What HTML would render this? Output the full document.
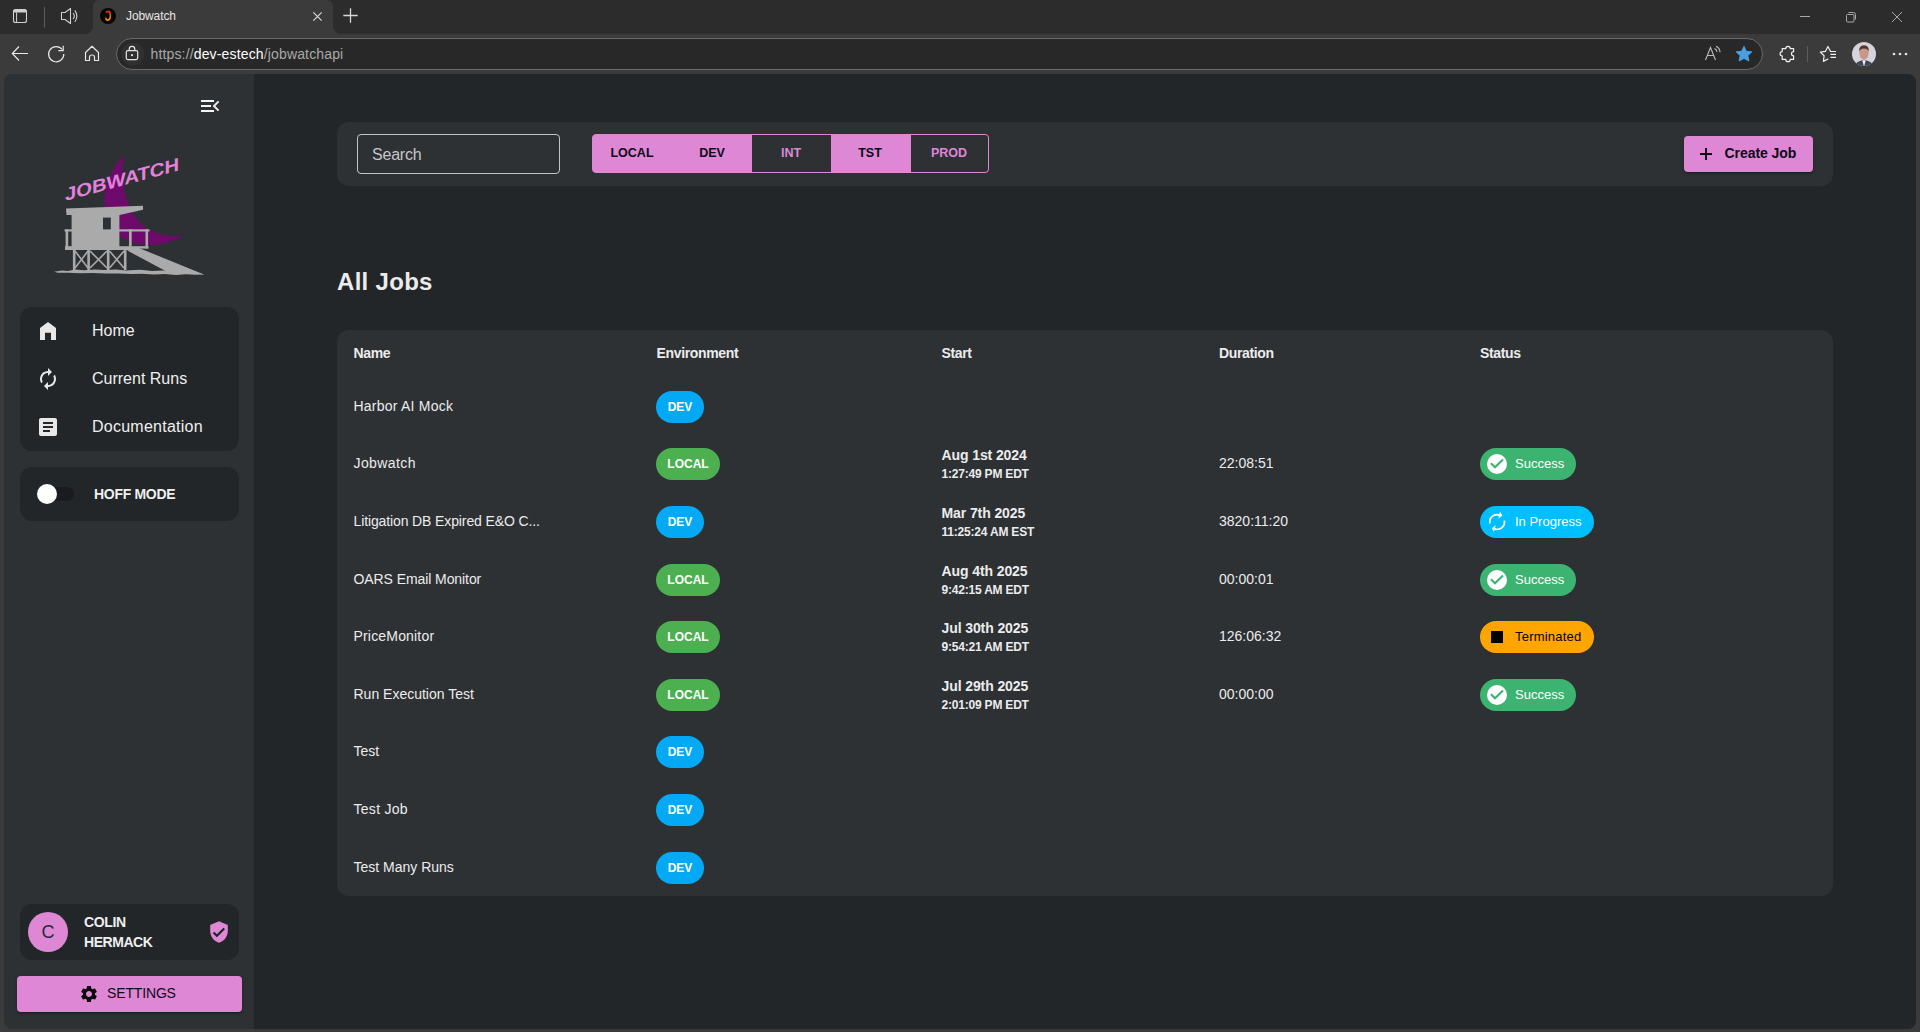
<!DOCTYPE html>
<html><head><meta charset="utf-8"><title>Jobwatch</title>
<style>
*{box-sizing:border-box;margin:0;padding:0}
html,body{width:1920px;height:1032px;overflow:hidden;background:#3b3b3b;font-family:"Liberation Sans",sans-serif;position:relative}
.a{position:absolute}
.t{position:absolute;line-height:1;white-space:nowrap}
.card{position:absolute;background:#232629;border-radius:12px}
.mcard{position:absolute;background:#2d3134;border-radius:12px}
.w{color:#efefef}
.tg{font-size:12.5px;font-weight:700;text-align:center;letter-spacing:0px}
.th{top:346.2px;font-size:14px;font-weight:700;color:#ececec;letter-spacing:-0.35px}
.nm{font-size:14px;color:#ececec}
.chip{position:absolute;height:32px;border-radius:16px;color:#fff;font-weight:700;font-size:12px;line-height:32px;text-align:center}
.d1{font-size:14px;font-weight:700;color:#ececec;letter-spacing:-0.1px}
.d2{font-size:12px;font-weight:700;color:#ececec;letter-spacing:-0.2px}
.du{font-size:14px;color:#ececec}
.st{position:absolute;height:32px;border-radius:16px;left:1480px}
.stt{font-size:13px}
</style></head>
<body>
<!-- browser chrome -->
<svg class="a" style="left:0;top:0" width="1920" height="74" viewBox="0 0 1920 74">
  <rect x="0" y="0" width="1920" height="74" fill="#3b3b3b"/>
  <!-- tab strip dark areas with rounded bottom corners near active tab -->
  <path d="M0 0H93V26a8 8 0 0 1 -8 8H0Z" fill="#2c2c2c"/>
  <path d="M333 0H1920V34H341a8 8 0 0 1 -8 -8Z" fill="#2c2c2c"/>
  <!-- active tab top corners -->
  <path d="M93 0H99a6 6 0 0 0 -6 6Z" fill="#2c2c2c"/>
  <path d="M333 0H327a6 6 0 0 1 6 6Z" fill="#2c2c2c"/>
  <!-- tab actions icon -->
  <rect x="13.5" y="9.5" width="13" height="13" rx="2" fill="none" stroke="#d0d0d0" stroke-width="1.1"/>
  <rect x="13.5" y="9.5" width="13" height="3" rx="1.5" fill="#d0d0d0"/>
  <line x1="16.6" y1="12.3" x2="16.6" y2="22.3" stroke="#d4d4d4" stroke-width="1"/>
  <line x1="44.5" y1="7" x2="44.5" y2="27.5" stroke="#5e5e5e" stroke-width="1"/>
  <!-- speaker -->
  <path d="M61.5 12.5H65L70.5 8.5V23.5L65 19.5H61.5Z" fill="none" stroke="#d0d0d0" stroke-width="1.1" stroke-linejoin="round"/>
  <path d="M73.1 13.1Q75.6 16 73.1 19" fill="none" stroke="#d0d0d0" stroke-width="1.1"/>
  <path d="M74.8 10.4Q79 16 74.8 21.8" fill="none" stroke="#d0d0d0" stroke-width="1.1"/>
  <!-- favicon -->
  <circle cx="108" cy="16" r="8" fill="#050505"/>
  <linearGradient id="jg" x1="0" y1="0" x2="0" y2="1"><stop offset="0" stop-color="#e02a08"/><stop offset="1" stop-color="#ff9a00"/></linearGradient><path d="M106.3 11.9L109.5 11.2Q110.8 15 110.2 17.5Q109.3 20.4 107.4 20.2Q106.1 20 105.9 18.4" fill="none" stroke="url(#jg)" stroke-width="1.6" stroke-linecap="round" stroke-linejoin="round"/>
  <text x="126" y="19.7" font-family="Liberation Sans" font-size="12" letter-spacing="-0.1" fill="#e6e6e6">Jobwatch</text>
  <!-- close tab -->
  <path d="M313.3 12.3L321.7 20.7M321.7 12.3L313.3 20.7" stroke="#d8d8d8" stroke-width="1.2"/>
  <!-- new tab -->
  <path d="M343.3 15.5H357.7M350.5 8.2V22.8" stroke="#d8d8d8" stroke-width="1.3"/>
  <!-- window controls -->
  <line x1="1800" y1="16.5" x2="1810" y2="16.5" stroke="#a8a8a8" stroke-width="1"/>
  <rect x="1846.5" y="14.5" width="7.5" height="7.5" rx="1" fill="none" stroke="#a8a8a8" stroke-width="1"/>
  <path d="M1848.5 12.5H1853.5a2 2 0 0 1 2 2V19.5" fill="none" stroke="#a8a8a8" stroke-width="1"/>
  <path d="M1892 12L1902 22M1902 12L1892 22" stroke="#a8a8a8" stroke-width="1"/>
  <!-- back / refresh / home -->
  <path d="M12.5 53.5H28M19 46.5L12.3 53.5L19 60.5" fill="none" stroke="#e6e6e6" stroke-width="1.2"/>
  <path d="M62.2 49.5A7.6 7.6 0 1 0 63.8 54" fill="none" stroke="#e6e6e6" stroke-width="1.2"/>
  <path d="M58.3 50.6H63.2V45.8" fill="none" stroke="#e6e6e6" stroke-width="1.2"/>
  <path d="M85.5 60.5V52.5L92 46.3L98.5 52.5V60.5H94.5V57Q94.5 55 92 55Q89.5 55 89.5 57V60.5Z" fill="none" stroke="#e6e6e6" stroke-width="1.2" stroke-linejoin="round"/>
  <!-- address bar -->
  <rect x="116.5" y="38.5" width="1646" height="31" rx="15.5" fill="#282828" stroke="#6a6a6a" stroke-width="1"/>
  <circle cx="132.8" cy="54" r="11.5" fill="#303030"/>
  <rect x="126.3" y="50.6" width="11.4" height="9" rx="1.5" fill="none" stroke="#e6e6e6" stroke-width="1.2"/>
  <path d="M129.2 50.6V49.2a2.8 2.8 0 0 1 5.6 0V50.6" fill="none" stroke="#e6e6e6" stroke-width="1.2"/>
  <circle cx="132" cy="55.2" r="1.1" fill="#e6e6e6"/>
  <text x="150.5" y="59" font-family="Liberation Sans" font-size="14" letter-spacing="0.15" fill="#a9a9a9">https://<tspan fill="#ffffff">dev-estech</tspan>/jobwatchapi</text>
  <!-- read aloud -->
  <path d="M1705.5 60L1710.5 47.5L1715.5 60M1707.3 55.5H1713.7" fill="none" stroke="#bdbdbd" stroke-width="1.1"/>
  <path d="M1714.5 48.5a4 4 0 0 1 2.5 3.5M1716 46.2a6.8 6.8 0 0 1 4 6" fill="none" stroke="#bdbdbd" stroke-width="1.1"/>
  <!-- star filled -->
  <path d="M1744 46.3L1746.4 51.3L1751.8 51.9L1747.8 55.6L1748.9 61L1744 58.3L1739.1 61L1740.2 55.6L1736.2 51.9L1741.6 51.3Z" fill="#4a9fdf" stroke="#4a9fdf" stroke-width="1" stroke-linejoin="round"/>
  <!-- extensions -->
  <path d="M1782.2 48.6H1785.8A2.2 2.3 0 0 1 1790.2 48.6H1793.6V51.7A2.1 2.05 0 0 0 1793.6 55.8V59.4H1790.2A2.2 2.3 0 0 1 1785.8 59.4H1782.2V55.9A2.1 2.15 0 0 1 1782.2 51.6Z" fill="none" stroke="#f0f0f0" stroke-width="1.2" stroke-linejoin="round"/>
  <line x1="1807.5" y1="46" x2="1807.5" y2="62" stroke="#5e5e5e" stroke-width="1"/>
  <!-- favorites -->
  <path d="M1830.6 51.5L1827.9 46.5L1825.5 51.3L1820.3 52.1L1824.1 55.8L1823.4 61.4L1827.9 59" fill="none" stroke="#f0f0f0" stroke-width="1.2" stroke-linejoin="round" stroke-linecap="round"/>
  <path d="M1830.4 51.5H1836M1830.4 54.4H1836M1830.4 57.3H1836" stroke="#f0f0f0" stroke-width="1.2"/>
  <!-- avatar -->
  <clipPath id="avc"><circle cx="1864" cy="54" r="12"/></clipPath>
  <g clip-path="url(#avc)">
    <rect x="1852" y="42" width="24" height="24" fill="#d6d3dc"/>
    <path d="M1854 67Q1855.5 61 1864 60Q1872.5 61 1874 67Z" fill="#3c4656"/>
    <path d="M1862.3 60.2L1864 67L1865.7 60.2Z" fill="#eeeeee"/>
    <ellipse cx="1864" cy="53.5" rx="4.6" ry="6.2" fill="#c8978a"/>
    <path d="M1859.2 52Q1858.6 45.5 1864 45.3Q1869.4 45.5 1868.8 52Q1868 48.6 1864 48.4Q1860 48.6 1859.2 52Z" fill="#5a3424"/>
  </g>
  <!-- more -->
  <circle cx="1894" cy="54" r="1.3" fill="#e6e6e6"/>
  <circle cx="1900" cy="54" r="1.3" fill="#e6e6e6"/>
  <circle cx="1906" cy="54" r="1.3" fill="#e6e6e6"/>
</svg>

<!-- app -->
<!-- sidebar -->
<div class="a" style="left:4px;top:74px;width:250px;height:955px;background:#2d3134;border-radius:8px 0 0 8px"></div>
<svg class="a" style="left:196px;top:94px" width="24" height="24" viewBox="0 0 24 24">
  <path d="M5 7H18M5 12H15M5 17H18" stroke="#f4f4f4" stroke-width="2"/>
  <path d="M22.6 7.4L18 12L22.6 16.6" fill="none" stroke="#ececec" stroke-width="2"/>
</svg>
<!-- logo -->
<svg class="a" style="left:50px;top:145px" width="160" height="135" viewBox="50 145 160 135">
  <path d="M124 155 C108 172 101 195 106 214 C112 236 132 247 154 245 C166 244 176 240 183.5 235.5 C165 238 146 232 136 218 C125 202 120 178 124 155Z" fill="#6d0a6c"/>
  <g fill="#aaaaaa">
    <path d="M66 208.5L143 205.8L143 209.8L119.5 215H66.5Z"/>
    <rect x="71.6" y="213" width="47.8" height="35.5"/>
    <rect x="64.5" y="229.3" width="85" height="2.2"/>
    <rect x="65" y="246.2" width="83.5" height="2.4"/>
    <rect x="65.6" y="229.3" width="2.6" height="19"/>
    <rect x="129" y="229.3" width="2.7" height="19"/>
    <rect x="145.5" y="229.3" width="2.6" height="19"/>
    <rect x="65" y="247.5" width="74" height="2.5"/>
    <rect x="72.9" y="248" width="2.6" height="22"/>
    <rect x="87.3" y="248" width="2.6" height="22"/>
    <rect x="106.9" y="248" width="2.6" height="22"/>
    <rect x="123.9" y="248" width="2.6" height="22"/>
    <path d="M127.2 250.5L139 248L204 274.5L166.5 271.5Z"/>
    <path d="M54 271.8L62 270.6L68 270.9L75 269.6L84 270.2L95 269.4L104 270.1L116 269.6L126 270.4L140 269.8L152 270.9L163 270.6L176 271.6L188 272.1L198 273.2L204.5 274.4L196 274.8L186 274.2L176 274.9L165 274.1L154 274.6L142 273.7L131 274.1L118 273.4L106 273.6L92 273.1L80 273.2L68 272.8L58 272.7Z"/>
  </g>
  <rect x="103" y="217.6" width="7.8" height="11.8" fill="#2d3134"/>
  <g stroke="#aaaaaa" stroke-width="1.6">
    <path d="M75 251L88 268M88 251L75 268M90 251L107 268M107 251L90 268M109.5 251L124 268M124 251L109.5 268"/>
  </g>
  <text x="0" y="0" transform="translate(65 201) skewY(-15)" font-family="Liberation Sans" font-weight="700" font-size="18.5" fill="#e382db" textLength="114" lengthAdjust="spacingAndGlyphs">JOBWATCH</text>
</svg>

<div class="card" style="left:20px;top:307px;width:219px;height:144px"></div>
<svg class="a" style="left:36px;top:319px" width="24" height="24" viewBox="0 0 24 24"><path d="M4 21V9l8-6 8 6v12h-5v-7.3h-6V21Z" fill="#e8e8e8"/></svg>
<svg class="a" style="left:36px;top:367px" width="24" height="24" viewBox="0 0 24 24"><g transform="translate(24 0) scale(-1 1)"><path d="M12 4V1L8 5l4 4V6c3.31 0 6 2.69 6 6 0 1.01-.25 1.97-.7 2.8l1.46 1.46C19.54 15.03 20 13.57 20 12c0-4.42-3.58-8-8-8zm0 14c-3.31 0-6-2.690-6-6 0-1.01.25-1.97.7-2.8L5.24 7.74C4.46 8.97 4 10.43 4 12c0 4.42 3.58 8 8 8v3l4-4-4-4v3z" fill="#e8e8e8"/></g></svg>
<svg class="a" style="left:36px;top:415px" width="24" height="24" viewBox="0 0 24 24"><path d="M19 3H5c-1.1 0-2 .9-2 2v14c0 1.1.9 2 2 2h14c1.1 0 2-.9 2-2V5c0-1.1-.9-2-2-2zm-5 14H7v-2h7v2zm3-4H7v-2h10v2zm0-4H7V7h10v2z" fill="#e8e8e8"/></svg>
<div class="t w" style="left:92px;top:323px;font-size:16px">Home</div>
<div class="t w" style="left:92px;top:371px;font-size:16px">Current Runs</div>
<div class="t w" style="left:92px;top:419px;font-size:16px;letter-spacing:0.25px">Documentation</div>

<div class="card" style="left:20px;top:467px;width:219px;height:54px"></div>
<div class="a" style="left:40px;top:487px;width:34px;height:14px;border-radius:7px;background:#191b1e"></div>
<div class="a" style="left:36.7px;top:483.7px;width:20.6px;height:20.6px;border-radius:50%;background:#ffffff"></div>
<div class="t w" style="left:94px;top:487.1px;font-size:14px;font-weight:700;letter-spacing:-0.3px">HOFF MODE</div>

<div class="card" style="left:20px;top:904px;width:219px;height:56px"></div>
<div class="a" style="left:28px;top:912px;width:40px;height:40px;border-radius:50%;background:#de87d5"></div>
<div class="t" style="left:28px;top:923.2px;width:40px;text-align:center;font-size:18px;color:#1f2a3c">C</div>
<div class="t w" style="left:84px;top:915.1px;font-size:14px;font-weight:700;letter-spacing:-0.35px">COLIN</div>
<div class="t w" style="left:84px;top:935.2px;font-size:14px;font-weight:700;letter-spacing:-0.45px">HERMACK</div>
<svg class="a" style="left:207px;top:920px" width="24" height="24" viewBox="0 0 24 24"><path d="M12 1.2L3.2 4.9v6.1c0 5.4 3.8 10.5 8.8 11.7 5-1.2 8.8-6.3 8.8-11.7V4.9Z" fill="#de87d5"/><path d="M6.5 12.5L9.9 15.8L17.2 8.5" fill="none" stroke="#1e2224" stroke-width="2.1"/></svg>

<div class="a" style="left:17px;top:976px;width:225px;height:36px;background:#de87d5;border-radius:4px;box-shadow:0 3px 1px -2px rgba(0,0,0,.2),0 2px 2px 0 rgba(0,0,0,.14),0 1px 5px 0 rgba(0,0,0,.12)"></div>
<svg class="a" style="left:79px;top:984px" width="20" height="20" viewBox="0 0 24 24"><path d="M19.14 12.94c.04-.3.06-.61.06-.94 0-.32-.02-.64-.07-.94l2.03-1.58c.18-.14.23-.41.12-.61l-1.92-3.32c-.12-.22-.37-.29-.59-.22l-2.39.96c-.5-.38-1.03-.7-1.62-.94l-.36-2.54c-.04-.24-.24-.41-.48-.41h-3.84c-.24 0-.43.17-.47.41l-.36 2.54c-.59.24-1.13.57-1.62.94l-2.39-.96c-.22-.08-.47 0-.59.22L2.74 8.87c-.12.21-.08.47.12.61l2.03 1.58c-.05.3-.09.63-.09.94s.02.64.07.94l-2.03 1.58c-.18.14-.23.41-.12.61l1.92 3.32c.12.22.37.29.59.22l2.39-.96c.5.38 1.03.7 1.62.94l.36 2.54c.05.24.24.41.48.41h3.84c.24 0 .44-.17.47-.41l.36-2.54c.59-.24 1.13-.56 1.62-.94l2.39.96c.22.08.47 0 .59-.22l1.92-3.32c.12-.22.07-.47-.12-.61l-2.01-1.58zM12 15.6c-1.98 0-3.6-1.62-3.6-3.6s1.62-3.6 3.6-3.6 3.6 1.62 3.6 3.6-1.62 3.6-3.6 3.6z" fill="#0a0a0a"/></svg>
<div class="t" style="left:107px;top:986.1px;font-size:14px;letter-spacing:-0.15px;color:#0c0c14">SETTINGS</div>

<!-- main -->
<div class="a" style="left:254px;top:74px;width:1662px;height:955px;background:#232629;border-radius:0 8px 8px 0"></div>
<div class="mcard" style="left:337px;top:122px;width:1496px;height:64px"></div>
<div class="a" style="left:357px;top:134px;width:203px;height:40px;border:1px solid #c4c4c4;border-radius:4px"></div>
<div class="t" style="left:372px;top:147px;font-size:16px;color:#c6c6c6;letter-spacing:-0.2px">Search</div>

<div class="a" style="left:592px;top:134px;width:397px;height:39px;border:1px solid #de87d5;border-radius:4px;background:#de87d5;overflow:hidden">
  <div class="a" style="left:159px;top:0;width:79px;height:37px;background:#2d3134"></div>
  <div class="a" style="left:318px;top:0;width:77px;height:37px;background:#2d3134"></div>
</div>
<div class="t tg" style="left:592px;top:146.6px;width:80px;color:#0b0b16">LOCAL</div>
<div class="t tg" style="left:672px;top:146.6px;width:80px;color:#0b0b16">DEV</div>
<div class="t tg" style="left:751px;top:146.6px;width:80px;color:#de87d5">INT</div>
<div class="t tg" style="left:830px;top:146.6px;width:80px;color:#0b0b16">TST</div>
<div class="t tg" style="left:910px;top:146.6px;width:78px;color:#de87d5">PROD</div>

<div class="a" style="left:1684px;top:136px;width:129px;height:36px;background:#de87d5;border-radius:4px;box-shadow:0 3px 1px -2px rgba(0,0,0,.2),0 2px 2px 0 rgba(0,0,0,.14),0 1px 5px 0 rgba(0,0,0,.12)"></div>
<svg class="a" style="left:1698px;top:146px" width="16" height="16" viewBox="0 0 16 16"><path d="M2 8H14M8 2V14" stroke="#0b0b16" stroke-width="1.9"/></svg>
<div class="t" style="left:1724.5px;top:146.2px;font-size:14px;font-weight:700;color:#0b0b16;letter-spacing:-0.05px">Create Job</div>

<div class="t" style="left:337px;top:269.6px;font-size:24px;font-weight:700;color:#ececec;letter-spacing:0.3px">All Jobs</div>

<div class="mcard" style="left:337px;top:330px;width:1496px;height:566px"></div>
<div class="t th" style="left:353.5px">Name</div>
<div class="t th" style="left:656.5px">Environment</div>
<div class="t th" style="left:941.5px">Start</div>
<div class="t th" style="left:1219px">Duration</div>
<div class="t th" style="left:1480px">Status</div>

<!-- rows -->
<div class="t nm" style="left:353.5px;top:399px;letter-spacing:0.23px">Harbor AI Mock</div>
<div class="chip" style="left:656px;top:391px;width:48px;background:#03a9f4">DEV</div>
<div class="t nm" style="left:353.5px;top:456px;letter-spacing:0.4px">Jobwatch</div>
<div class="chip" style="left:656px;top:448px;width:64px;background:#4caf50">LOCAL</div>
<div class="t d1" style="left:941.5px;top:448px">Aug 1st 2024</div>
<div class="t d2" style="left:941.5px;top:468px">1:27:49 PM EDT</div>
<div class="t du" style="left:1219px;top:456px">22:08:51</div>
<div class="st" style="top:448px;width:96px;background:#3cb371"></div>
<svg class="a" style="left:1485px;top:452px" width="24" height="24" viewBox="0 0 24 24"><circle cx="12" cy="12" r="10" fill="#fff"/><path d="M5.9 11.3L10 15.2L18 7.4" fill="none" stroke="#3cb371" stroke-width="2.1"/></svg>
<div class="t stt" style="left:1515px;top:457px;color:#fff">Success</div>
<div class="t nm" style="left:353.5px;top:514px;letter-spacing:-0.12px">Litigation DB Expired E&amp;O C...</div>
<div class="chip" style="left:656px;top:506px;width:48px;background:#03a9f4">DEV</div>
<div class="t d1" style="left:941.5px;top:506px">Mar 7th 2025</div>
<div class="t d2" style="left:941.5px;top:526px">11:25:24 AM EST</div>
<div class="t du" style="left:1219px;top:514px">3820:11:20</div>
<div class="st" style="top:506px;width:114px;background:#00bfff"></div>
<svg class="a" style="left:1485px;top:510px" width="24" height="24" viewBox="0 0 24 24"><path d="M4.9 13.4A7.2 7.2 0 0 1 14.6 5.2M19.3 10.6A7.2 7.2 0 0 1 9.6 18.8" fill="none" stroke="#fff" stroke-width="1.7"/><path d="M17.4 5.6L15 1.5L13.3 8.5ZM6.8 18.3L10.7 15.2L9 21.9Z" fill="#fff"/></svg>
<div class="t stt" style="left:1515px;top:515px;color:#fff">In Progress</div>
<div class="t nm" style="left:353.5px;top:572px;letter-spacing:-0.08px">OARS Email Monitor</div>
<div class="chip" style="left:656px;top:564px;width:64px;background:#4caf50">LOCAL</div>
<div class="t d1" style="left:941.5px;top:564px">Aug 4th 2025</div>
<div class="t d2" style="left:941.5px;top:584px">9:42:15 AM EDT</div>
<div class="t du" style="left:1219px;top:572px">00:00:01</div>
<div class="st" style="top:564px;width:96px;background:#3cb371"></div>
<svg class="a" style="left:1485px;top:568px" width="24" height="24" viewBox="0 0 24 24"><circle cx="12" cy="12" r="10" fill="#fff"/><path d="M5.9 11.3L10 15.2L18 7.4" fill="none" stroke="#3cb371" stroke-width="2.1"/></svg>
<div class="t stt" style="left:1515px;top:573px;color:#fff">Success</div>
<div class="t nm" style="left:353.5px;top:629px;letter-spacing:0.18px">PriceMonitor</div>
<div class="chip" style="left:656px;top:621px;width:64px;background:#4caf50">LOCAL</div>
<div class="t d1" style="left:941.5px;top:621px">Jul 30th 2025</div>
<div class="t d2" style="left:941.5px;top:641px">9:54:21 AM EDT</div>
<div class="t du" style="left:1219px;top:629px">126:06:32</div>
<div class="st" style="top:621px;width:114px;background:#ffa500"></div>
<div class="a" style="left:1491px;top:631px;width:12px;height:12px;background:#000"></div>
<div class="t stt" style="left:1515px;top:630px;color:#000;letter-spacing:0.2px">Terminated</div>
<div class="t nm" style="left:353.5px;top:687px;letter-spacing:0px">Run Execution Test</div>
<div class="chip" style="left:656px;top:679px;width:64px;background:#4caf50">LOCAL</div>
<div class="t d1" style="left:941.5px;top:679px">Jul 29th 2025</div>
<div class="t d2" style="left:941.5px;top:699px">2:01:09 PM EDT</div>
<div class="t du" style="left:1219px;top:687px">00:00:00</div>
<div class="st" style="top:679px;width:96px;background:#3cb371"></div>
<svg class="a" style="left:1485px;top:683px" width="24" height="24" viewBox="0 0 24 24"><circle cx="12" cy="12" r="10" fill="#fff"/><path d="M5.9 11.3L10 15.2L18 7.4" fill="none" stroke="#3cb371" stroke-width="2.1"/></svg>
<div class="t stt" style="left:1515px;top:688px;color:#fff">Success</div>
<div class="t nm" style="left:353.5px;top:744px;letter-spacing:0px">Test</div>
<div class="chip" style="left:656px;top:736px;width:48px;background:#03a9f4">DEV</div>
<div class="t nm" style="left:353.5px;top:802px;letter-spacing:0.28px">Test Job</div>
<div class="chip" style="left:656px;top:794px;width:48px;background:#03a9f4">DEV</div>
<div class="t nm" style="left:353.5px;top:860px;letter-spacing:0px">Test Many Runs</div>
<div class="chip" style="left:656px;top:852px;width:48px;background:#03a9f4">DEV</div>
<!-- /rows -->
</body></html>
